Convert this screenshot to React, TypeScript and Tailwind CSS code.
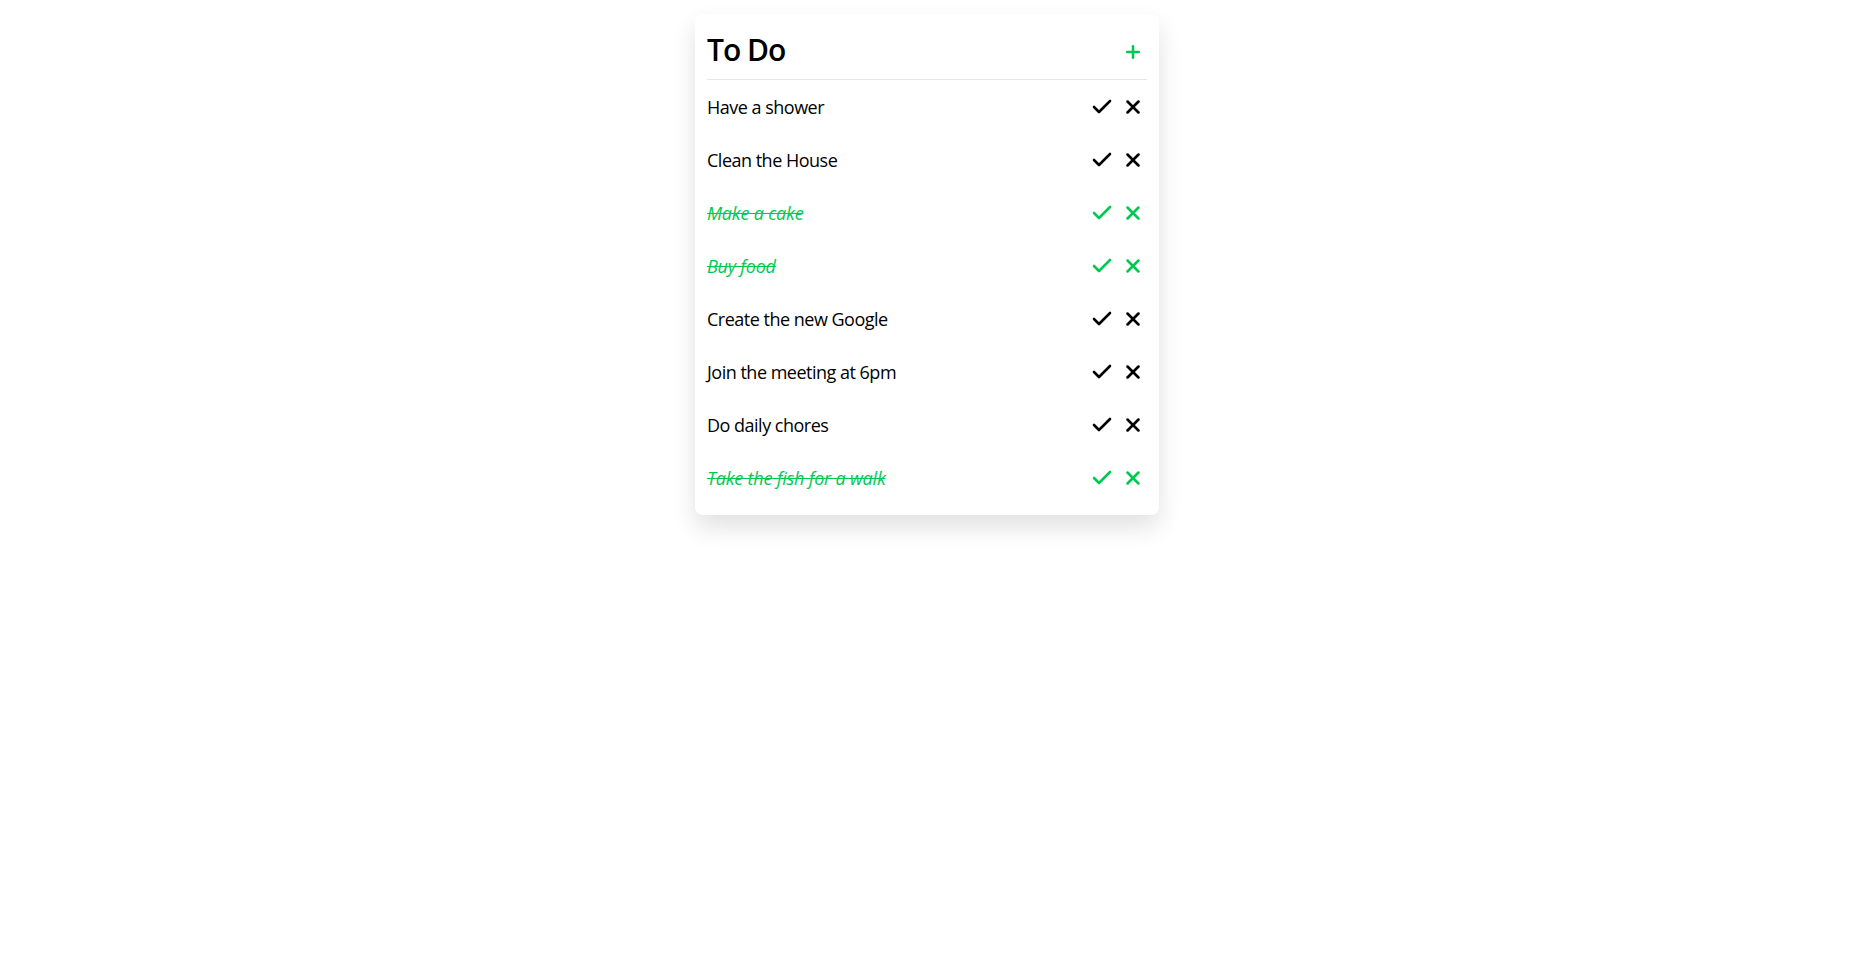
import { Check, Plus, X } from "lucide-react";

type Todo = {
  title: string;
  done: boolean;
};

const todos: Todo[] = [
  { title: "Have a shower", done: false },
  { title: "Clean the House", done: false },
  { title: "Make a cake", done: true },
  { title: "Buy food", done: true },
  { title: "Create the new Google", done: false },
  { title: "Join the meeting at 6pm", done: false },
  { title: "Do daily chores", done: false },
  { title: "Take the fish for a walk", done: true },
];

const TodoItem = ({ title, done }: Todo) => {
  return (
    <li
      className={`flex h-[53px] items-center justify-between ${
        done ? "text-green-500" : "text-black"
      }`}
    >
      <span
        className={`text-lg ${
          done ? "italic line-through tracking-[-0.2px]" : "tracking-[-0.5px]"
        }`}
      >
        {title}
      </span>
      <div className="flex items-center gap-2 pr-[3px]">
        <button className="cursor-pointer">
          <Check size={24} strokeWidth={2.6} />
        </button>
        <button className="cursor-pointer">
          <X size={22} strokeWidth={2.8} />
        </button>
      </div>
    </li>
  );
};

const App = () => {
  return (
    <div
      className="flex min-h-screen w-full justify-center bg-white pt-[14px] pl-1"
      style={{ fontFamily: '"Open Sans", "Noto Sans", sans-serif' }}
    >
      <div className="h-fit w-[464px] rounded-lg bg-white px-3 pt-[18px] pb-[11px] shadow-[0_12px_24px_rgba(0,0,0,0.12)]">
        <header className="flex h-9 items-center justify-between">
          <h1 className="text-3xl font-semibold tracking-[-1px] text-black">
            To Do
          </h1>
          <button className="mt-1 mr-[4px] cursor-pointer text-green-500">
            <Plus size={20} strokeWidth={3} />
          </button>
        </header>
        <hr className="mt-[11px] border-gray-200" />
        <ul>
          {todos.map((todo) => (
            <TodoItem key={todo.title} {...todo} />
          ))}
        </ul>
      </div>
    </div>
  );
};

export default App;
